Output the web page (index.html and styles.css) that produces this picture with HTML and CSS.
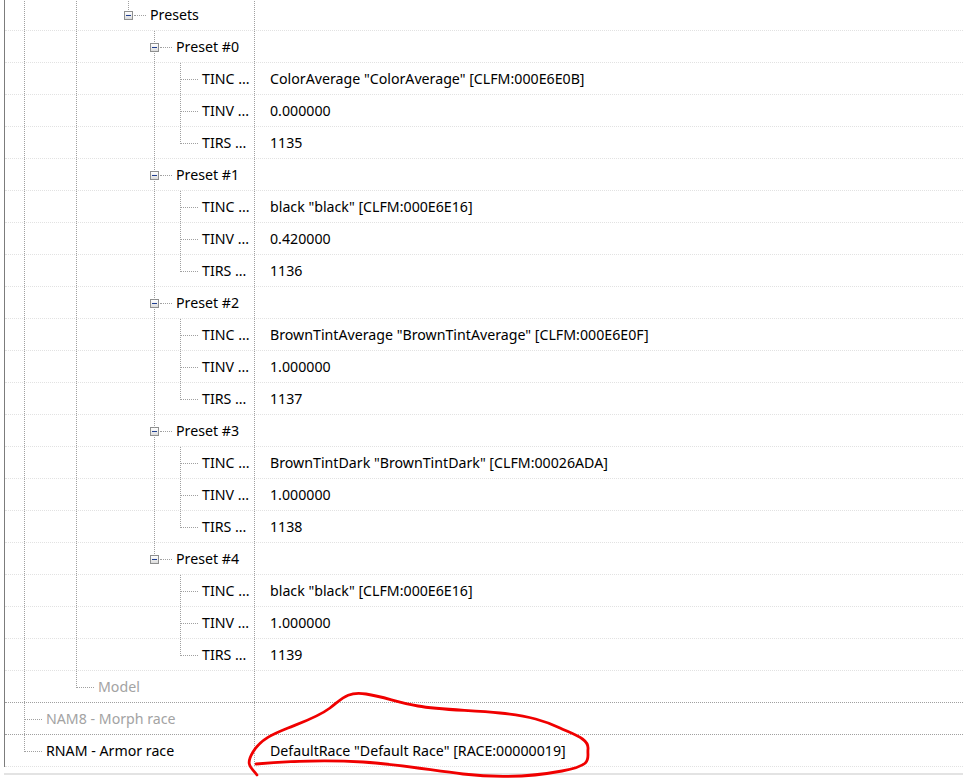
FILE: index.html
```html
<!DOCTYPE html>
<html lang="en">
<head>
  <meta charset="UTF-8">
  <title>Record view</title>
  <link rel="stylesheet" href="styles.css">
</head>
<body>

<div class="view">
  <div class="tree">

    <div class="row">
      <div class="name"><span class="g pipe"></span><span class="g"></span><span class="g pipe"></span><span class="g"></span><span class="own elbow"><span class="box"></span></span><span class="label">Presets</span></div>
      <div class="value"></div>
    </div>

    <!-- Preset #0 -->
    <div class="row">
      <div class="name"><span class="g pipe"></span><span class="g"></span><span class="g pipe"></span><span class="g"></span><span class="g"></span><span class="own tee"><span class="box"></span></span><span class="label">Preset #0</span></div>
      <div class="value"></div>
    </div>
    <div class="row">
      <div class="name"><span class="g pipe"></span><span class="g"></span><span class="g pipe"></span><span class="g"></span><span class="g"></span><span class="g pipe"></span><span class="own tee"></span><span class="label">TINC ...</span></div>
      <div class="value">ColorAverage "ColorAverage" [CLFM:000E6E0B]</div>
    </div>
    <div class="row">
      <div class="name"><span class="g pipe"></span><span class="g"></span><span class="g pipe"></span><span class="g"></span><span class="g"></span><span class="g pipe"></span><span class="own tee"></span><span class="label">TINV ...</span></div>
      <div class="value">0.000000</div>
    </div>
    <div class="row">
      <div class="name"><span class="g pipe"></span><span class="g"></span><span class="g pipe"></span><span class="g"></span><span class="g"></span><span class="g pipe"></span><span class="own elbow"></span><span class="label">TIRS ...</span></div>
      <div class="value">1135</div>
    </div>

    <!-- Preset #1 -->
    <div class="row">
      <div class="name"><span class="g pipe"></span><span class="g"></span><span class="g pipe"></span><span class="g"></span><span class="g"></span><span class="own tee"><span class="box"></span></span><span class="label">Preset #1</span></div>
      <div class="value"></div>
    </div>
    <div class="row">
      <div class="name"><span class="g pipe"></span><span class="g"></span><span class="g pipe"></span><span class="g"></span><span class="g"></span><span class="g pipe"></span><span class="own tee"></span><span class="label">TINC ...</span></div>
      <div class="value">black "black" [CLFM:000E6E16]</div>
    </div>
    <div class="row">
      <div class="name"><span class="g pipe"></span><span class="g"></span><span class="g pipe"></span><span class="g"></span><span class="g"></span><span class="g pipe"></span><span class="own tee"></span><span class="label">TINV ...</span></div>
      <div class="value">0.420000</div>
    </div>
    <div class="row">
      <div class="name"><span class="g pipe"></span><span class="g"></span><span class="g pipe"></span><span class="g"></span><span class="g"></span><span class="g pipe"></span><span class="own elbow"></span><span class="label">TIRS ...</span></div>
      <div class="value">1136</div>
    </div>

    <!-- Preset #2 -->
    <div class="row">
      <div class="name"><span class="g pipe"></span><span class="g"></span><span class="g pipe"></span><span class="g"></span><span class="g"></span><span class="own tee"><span class="box"></span></span><span class="label">Preset #2</span></div>
      <div class="value"></div>
    </div>
    <div class="row">
      <div class="name"><span class="g pipe"></span><span class="g"></span><span class="g pipe"></span><span class="g"></span><span class="g"></span><span class="g pipe"></span><span class="own tee"></span><span class="label">TINC ...</span></div>
      <div class="value">BrownTintAverage "BrownTintAverage" [CLFM:000E6E0F]</div>
    </div>
    <div class="row">
      <div class="name"><span class="g pipe"></span><span class="g"></span><span class="g pipe"></span><span class="g"></span><span class="g"></span><span class="g pipe"></span><span class="own tee"></span><span class="label">TINV ...</span></div>
      <div class="value">1.000000</div>
    </div>
    <div class="row">
      <div class="name"><span class="g pipe"></span><span class="g"></span><span class="g pipe"></span><span class="g"></span><span class="g"></span><span class="g pipe"></span><span class="own elbow"></span><span class="label">TIRS ...</span></div>
      <div class="value">1137</div>
    </div>

    <!-- Preset #3 -->
    <div class="row">
      <div class="name"><span class="g pipe"></span><span class="g"></span><span class="g pipe"></span><span class="g"></span><span class="g"></span><span class="own tee"><span class="box"></span></span><span class="label">Preset #3</span></div>
      <div class="value"></div>
    </div>
    <div class="row">
      <div class="name"><span class="g pipe"></span><span class="g"></span><span class="g pipe"></span><span class="g"></span><span class="g"></span><span class="g pipe"></span><span class="own tee"></span><span class="label">TINC ...</span></div>
      <div class="value">BrownTintDark "BrownTintDark" [CLFM:00026ADA]</div>
    </div>
    <div class="row">
      <div class="name"><span class="g pipe"></span><span class="g"></span><span class="g pipe"></span><span class="g"></span><span class="g"></span><span class="g pipe"></span><span class="own tee"></span><span class="label">TINV ...</span></div>
      <div class="value">1.000000</div>
    </div>
    <div class="row">
      <div class="name"><span class="g pipe"></span><span class="g"></span><span class="g pipe"></span><span class="g"></span><span class="g"></span><span class="g pipe"></span><span class="own elbow"></span><span class="label">TIRS ...</span></div>
      <div class="value">1138</div>
    </div>

    <!-- Preset #4 -->
    <div class="row">
      <div class="name"><span class="g pipe"></span><span class="g"></span><span class="g pipe"></span><span class="g"></span><span class="g"></span><span class="own elbow"><span class="box"></span></span><span class="label">Preset #4</span></div>
      <div class="value"></div>
    </div>
    <div class="row">
      <div class="name"><span class="g pipe"></span><span class="g"></span><span class="g pipe"></span><span class="g"></span><span class="g"></span><span class="g"></span><span class="own tee"></span><span class="label">TINC ...</span></div>
      <div class="value">black "black" [CLFM:000E6E16]</div>
    </div>
    <div class="row">
      <div class="name"><span class="g pipe"></span><span class="g"></span><span class="g pipe"></span><span class="g"></span><span class="g"></span><span class="g"></span><span class="own tee"></span><span class="label">TINV ...</span></div>
      <div class="value">1.000000</div>
    </div>
    <div class="row">
      <div class="name"><span class="g pipe"></span><span class="g"></span><span class="g pipe"></span><span class="g"></span><span class="g"></span><span class="g"></span><span class="own elbow"></span><span class="label">TIRS ...</span></div>
      <div class="value">1139</div>
    </div>

    <div class="row top-sep">
      <div class="name"><span class="g pipe"></span><span class="g"></span><span class="own elbow"></span><span class="label muted">Model</span></div>
      <div class="value"></div>
    </div>
    <div class="row top-sep">
      <div class="name"><span class="own tee"></span><span class="label muted">NAM8 - Morph race</span></div>
      <div class="value"></div>
    </div>
    <div class="row">
      <div class="name"><span class="own elbow"></span><span class="label">RNAM - Armor race</span></div>
      <div class="value">DefaultRace "Default Race" [RACE:00000019]</div>
    </div>

  </div>
  <div class="hscroll"></div>

  <svg class="mark" width="963" height="779" viewBox="0 0 963 779">
    <path d="M256 765 C 290 762, 330 761, 363 763 S 430 771, 463 775 S 530 778, 562 772 S 587 760, 588 750 S 575 736, 560 729 S 530 717, 500 714 S 440 711, 418 707 S 385 698, 366 695 S 342 700, 330 709 S 303 723, 288 729 S 261 740, 253 753 S 251 768, 257 776"
          fill="none" stroke="#f00000" stroke-width="2.8" stroke-linecap="round" stroke-linejoin="round"/>
  </svg>
</div>

</body>
</html>
```

FILE: styles.css
```css
* {
  box-sizing: border-box;
  margin: 0;
  padding: 0;
}

body {
  font-family: 'Noto Sans', 'Open Sans', sans-serif;
  font-size: 14.2px;
  color: #000;
  background: #fff;
  overflow: hidden;
}

.view {
  position: relative;
  width: 963px;
  height: 779px;
  padding-left: 4px;
}

.tree {
  margin-top: -1px;
  border-left: 1px solid #7c7c7c;
}

.row {
  display: flex;
  height: 32px;
  border-bottom: 1px dotted #e2e2e2;
}

.row.top-sep {
  border-bottom-color: #a0a0a0;
}

.name {
  display: flex;
  align-items: center;
  width: 250px;
  flex: none;
  padding-left: 6px;
  border-right: 1px dotted #a0a0a0;
  white-space: nowrap;
  overflow: hidden;
}

.value {
  flex: 1;
  display: flex;
  align-items: center;
  padding-left: 15px;
  white-space: nowrap;
}

/* tree guide cells */
.g,
.own {
  position: relative;
  align-self: stretch;
  flex: none;
  width: 26px;
}

.own {
  width: 35px;
}

.g.pipe::before,
.own::before {
  content: "";
  position: absolute;
  left: 13px;
  top: 0;
  bottom: 0;
  border-left: 1px dotted #a0a0a0;
}

.own.elbow::before {
  bottom: auto;
  height: 17px;
}

.own::after {
  content: "";
  position: absolute;
  left: 14px;
  top: 16px;
  width: 17px;
  border-top: 1px dotted #a0a0a0;
}

.own .box {
  position: absolute;
  z-index: 1;
  left: 9px;
  top: 12px;
  width: 9px;
  height: 9px;
  border: 1px solid #8e8f8f;
  background: linear-gradient(#ffffff, #dcdcdc);
}

.own .box::after {
  content: "";
  position: absolute;
  left: 1px;
  top: 3px;
  width: 5px;
  height: 1px;
  background: #1f3e8f;
}

.own:has(.box)::after {
  left: 19px;
  width: 12px;
}

.label.muted {
  color: #a3a3a3;
}

.hscroll {
  margin-top: 6px;
  height: 2px;
  background: #e3e3e3;
}

.mark {
  position: absolute;
  left: 0;
  top: 0;
  pointer-events: none;
}
```
